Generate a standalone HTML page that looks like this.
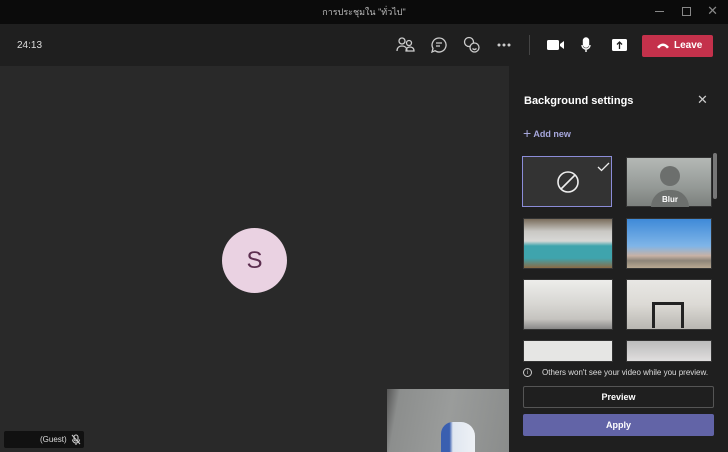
<!DOCTYPE html>
<html><head><meta charset="utf-8"><style>
*{margin:0;padding:0;box-sizing:border-box}
body{width:728px;height:452px;overflow:hidden;background:#292929;font-family:"Liberation Sans","Noto Sans CJK SC",sans-serif;color:#fff;position:relative}
.abs{position:absolute}
.title{left:0;top:0;width:728px;height:24px;background:#0b0b0b;font-size:9px;color:#bbb;text-align:center;line-height:24px}
.bar{left:0;top:24px;width:728px;height:42px;background:#1f1f1f}
.main{left:0;top:66px;width:509px;height:386px;background:#292929}
.panel{left:509px;top:66px;width:219px;height:386px;background:#1f1f1f}
.th{position:absolute;width:90px;height:51px;border:1px solid #333}
</style></head><body>
<div class="abs title">การประชุมใน "ทั่วไป"</div>
<div class="abs" style="right:64px;top:11px;width:9px;height:1px;background:#888"></div>
<div class="abs" style="right:37px;top:7px;width:9px;height:9px;border:1px solid #888"></div>
<div class="abs" style="right:10px;top:3px;color:#888;font-size:13px">✕</div>
<div class="abs bar"></div>
<div class="abs" style="left:17px;top:40px;font-size:10px;color:#ddd">24:13</div>
<svg class="abs" style="left:396px;top:36px" width="20" height="18" fill="none" stroke="#ccc" stroke-width="1.3"><circle cx="6" cy="5" r="3"/><circle cx="13" cy="7" r="2.5"/><path d="M1 15c0-4 3-5 5-5s5 1 5 5M10 15c0-3 2-4 4-4s4 1 4 4z"/></svg>
<svg class="abs" style="left:431px;top:37px" width="16" height="16" fill="none" stroke="#ccc" stroke-width="1.3"><path d="M8 1a7 7 0 1 1-4 12.7L1 15l1-3.5A7 7 0 0 1 8 1z"/><path d="M5 6h6M5 9h4"/></svg>
<svg class="abs" style="left:463px;top:36px" width="18" height="18" fill="none" stroke="#ccc" stroke-width="1.3"><circle cx="6" cy="6" r="4.5"/><circle cx="11.5" cy="11.5" r="4.5" fill="#1f1f1f"/><path d="M9.5 12.5q2 2 4 0"/></svg>
<svg class="abs" style="left:497px;top:43px" width="16" height="4" fill="#ccc"><circle cx="2" cy="2" r="1.5"/><circle cx="7" cy="2" r="1.5"/><circle cx="12" cy="2" r="1.5"/></svg>
<div class="abs" style="left:529px;top:35px;width:1px;height:20px;background:#444"></div>
<svg class="abs" style="left:547px;top:39px" width="18" height="12" fill="#fff"><rect x="0" y="1" width="12" height="10" rx="1.5"/><path d="M13 5l4-3v8l-4-3z"/></svg>
<svg class="abs" style="left:581px;top:37px" width="10" height="16" fill="none" stroke="#fff" stroke-width="1.4"><rect x="2.5" y="1" width="5" height="9" rx="2.5" fill="#fff"/><path d="M1 8a4 4 0 0 0 8 0M5 12v3"/></svg>
<svg class="abs" style="left:612px;top:39px" width="15" height="12"><rect width="15" height="12" rx="1.5" fill="#fff"/><path d="M7.5 3v7M5 5.5l2.5-2.5 2.5 2.5" stroke="#1f1f1f" stroke-width="1.3" fill="none"/></svg>
<div class="abs" style="left:642px;top:35px;width:71px;height:22px;background:#c4314b;border-radius:2px;font-size:10px;font-weight:bold;line-height:22px;padding-left:32px">Leave</div>
<svg class="abs" style="left:656px;top:42px" width="14" height="7"><path d="M1 5q6-7 12 0l-2 1.5-2-2q-2-1-4 0l-2 2z" fill="#fff"/></svg>
<div class="abs main"></div>
<div class="abs" style="left:222px;top:228px;width:65px;height:65px;border-radius:50%;background:#ead2e2;color:#5c2e4f;font-size:24px;text-align:center;line-height:65px">S</div>
<div class="abs" style="left:387px;top:389px;width:122px;height:63px;background:linear-gradient(100deg,#555 0%,#8c8e8d 10%,#9a9c9b 50%,#8a8c8b 100%)"></div>
<div class="abs" style="left:441px;top:422px;width:34px;height:30px;border-radius:12px 14px 0 0;background:linear-gradient(90deg,#3a5fb0 0%,#3a5fb0 25%,#dfe6f0 35%,#eef1f5 100%)"></div>
<div class="abs" style="left:4px;top:431px;width:80px;height:17px;background:#111;border-radius:2px;font-size:8px;color:#ddd;line-height:17px;padding-left:36px">(Guest)</div>
<svg class="abs" style="left:71px;top:434px" width="10" height="11" fill="none" stroke="#ccc" stroke-width="1.1"><rect x="3" y="1" width="4" height="6" rx="2"/><path d="M1.5 5.5a3.5 3.5 0 0 0 7 0M5 9v2M1 1l8 9"/></svg>
<div class="abs panel"></div>
<div class="abs" style="left:524px;top:95px;font-size:11px;font-weight:bold">Background settings</div>
<div class="abs" style="left:697px;top:92px;font-size:13px;color:#ccc">✕</div>
<div class="abs" style="left:523px;top:125px;font-size:9px;color:#a6a7dc;font-weight:bold"><span style="font-size:14px;font-weight:normal;vertical-align:-1px">+</span>  Add new</div>
<div class="th" style="left:522px;top:156px;border:1px solid #8b8cd8;background:#333"></div>
<svg class="abs" style="left:556px;top:170px" width="24" height="24" fill="none" stroke="#eee" stroke-width="1.6"><circle cx="12" cy="12" r="10"/><path d="M5 19L19 5"/></svg>
<svg class="abs" style="left:597px;top:162px" width="13" height="10" fill="none" stroke="#eee" stroke-width="1.3"><path d="M1 5l3.5 3.5L12 1"/></svg>
<div class="th" style="left:626px;top:157px;width:86px;height:50px;background:linear-gradient(#b4b8b5,#959a97 60%,#7c807d)"></div>
<div class="abs" style="left:660px;top:166px;width:20px;height:20px;border-radius:50%;background:#6c6f6d"></div>
<div class="abs" style="left:651px;top:190px;width:38px;height:17px;border-radius:19px 19px 0 0;background:#6c6f6d;font-size:8px;font-weight:bold;text-align:center;line-height:20px">Blur</div>
<div class="th" style="left:523px;top:218px;background:linear-gradient(180deg,#7a6d5c 0%,#c9c8c4 25%,#d8d8d6 45%,#3fa4ad 55%,#3fa4ad 80%,#8a6a45 100%)"></div>
<div class="th" style="left:626px;top:218px;width:86px;background:linear-gradient(180deg,#3f8ad8 0%,#7fb5e8 55%,#c8b2a5 75%,#8d8579 85%,#b8a892 100%)"></div>
<div class="th" style="left:523px;top:279px;background:linear-gradient(180deg,#ededeb 0%,#d7d6d2 50%,#c5c3bf 80%,#888 100%)"></div>
<div class="th" style="left:626px;top:279px;width:86px;background:linear-gradient(180deg,#e8e7e4 0%,#dcdad5 50%,#b9b7b2 100%)"></div>
<div class="abs" style="left:652px;top:302px;width:32px;height:26px;border:3px solid #222;border-bottom:none"></div>
<div class="th" style="left:523px;top:340px;height:22px;background:#e6e6e4"></div>
<div class="th" style="left:626px;top:340px;width:86px;height:22px;background:linear-gradient(#bbb,#e0dede)"></div>
<div class="abs" style="left:509px;top:362px;width:219px;height:90px;background:#1f1f1f"></div>
<div class="abs" style="left:713px;top:153px;width:4px;height:46px;border-radius:2px;background:#777"></div>
<div class="abs" style="left:523px;top:368px;width:9px;height:9px;border:1px solid #ccc;border-radius:50%;font-size:6px;text-align:center;line-height:8px;color:#ccc">i</div>
<div class="abs" style="left:542px;top:368px;font-size:8px;color:#ddd">Others won't see your video while you preview.</div>
<div class="abs" style="left:523px;top:386px;width:191px;height:22px;border:1px solid #555;border-radius:2px;font-size:9px;font-weight:bold;text-align:center;line-height:20px">Preview</div>
<div class="abs" style="left:523px;top:414px;width:191px;height:22px;background:#6264a7;border-radius:2px;font-size:9px;font-weight:bold;text-align:center;line-height:22px">Apply</div>
</body></html>
